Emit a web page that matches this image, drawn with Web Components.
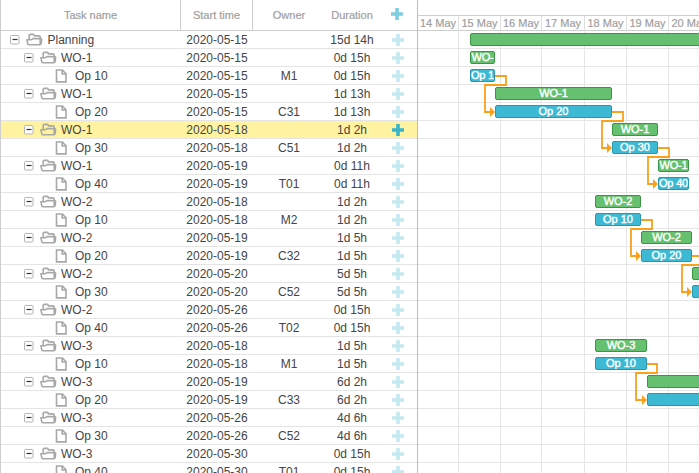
<!DOCTYPE html>
<html lang="en">
<head>
<meta charset="utf-8">
<title>Planning</title>
<style>
body{margin:0;width:699px;height:473px;overflow:hidden;background:#fff;font-family:"Liberation Sans",Arial,sans-serif;font-size:12px;color:#454545}
</style>
</head>
<body>
<gantt-app></gantt-app>
<script>
const shadow = (el, html) => { el.attachShadow({mode: "open"}).innerHTML = html; };

customElements.define("plus-icon", class extends HTMLElement {
  connectedCallback() {
    shadow(this, `<style>:host{display:block;width:12px;height:12px;opacity:.28}:host([strong]){opacity:.95}:host([head]){opacity:.62}svg{display:block}</style>
    <svg width="12" height="12"><path d="M4.2 0h3.6v4.2H12v3.6H7.8V12H4.2V7.8H0V4.2h4.2z" fill="#2fb2cc"/></svg>`);
  }
});

customElements.define("tree-icon", class extends HTMLElement {
  connectedCallback() {
    const shapes = {
      toggle: `<svg width="11" height="11"><rect x="1.5" y="1.5" width="8.5" height="8.5" rx="1" fill="#fff" stroke="#b4b4b4"/><path d="M3.5 5.5h5" stroke="#333" stroke-width="1.2"/></svg>`,
      folder: `<svg width="17" height="13"><path d="M3.2 6V2.6Q3.2 1.4 4.4 1.4H7.4L8.8 2.9H13Q14.2 2.9 14.2 4V11M3 11.8Q2 11.8 1.8 10.8L.9 6.7H5.4L7 5.6H14.6Q15.7 5.6 15.6 6.8L15.1 10.7Q15 11.8 13.8 11.8Z" fill="none" stroke="#a8a8a8" stroke-width="1.6" stroke-linejoin="round"/></svg>`,
      file: `<svg width="12" height="14"><path d="M1.5 1H7.4L11 4.7V12.9H1.5ZM7.2 1V5H11" fill="#fff" stroke="#a8a8a8" stroke-width="1.6"/></svg>`
    };
    shadow(this, `<style>:host{display:block;flex:none}svg{display:block}</style>${shapes[this.getAttribute("kind")]}`);
  }
});

customElements.define("grid-head", class extends HTMLElement {
  connectedCallback() {
    shadow(this, `<style>
      :host{display:grid;grid-template-columns:180px 72px 72px 54px 38px;height:30px;border-bottom:1px solid #cecece;font-size:11px;color:#a0a0a0;-webkit-text-stroke:.2px #a0a0a0}
      div{display:flex;align-items:center;justify-content:center;white-space:nowrap;box-sizing:border-box}
      .line{border-right:1px solid #cecece}
      .p{padding-bottom:2px;padding-right:2px}
    </style>
    <div class="line">Task name</div><div class="line">Start time</div><div>Owner</div><div>Duration</div><div class="p"><plus-icon head></plus-icon></div>`);
  }
});

customElements.define("grid-row", class extends HTMLElement {
  connectedCallback() {
    const a = k => this.getAttribute(k) || "";
    const kind = a("kind");
    const icons = kind === "op"
      ? `<tree-icon kind="file"></tree-icon>`
      : `<tree-icon kind="toggle"></tree-icon><tree-icon kind="folder"></tree-icon>`;
    shadow(this, `<style>
      :host{display:grid;grid-template-columns:180px 72px 72px 54px 38px;height:17px;border-bottom:1px solid #e4e4e4}
      :host([selected]){background:#fff3a1}
      div{display:flex;align-items:center;justify-content:center;white-space:nowrap;min-width:0;height:17px}
      .name{justify-content:flex-start;box-sizing:border-box}
      .root{padding-left:8px}.wo{padding-left:22px}.op{padding-left:54px}
      .root tree-icon+tree-icon,.wo tree-icon+tree-icon{margin-left:6px}
      span{margin-left:4.5px}
      .wo span{margin-left:4px}
      .op span{margin-left:8px}
    </style>
    <div class="name ${kind}">${icons}<span><slot></slot></span></div>
    <div>${a("start")}</div><div>${a("owner")}</div><div>${a("duration")}</div>
    <div><plus-icon ${this.hasAttribute("selected") ? "strong" : ""}></plus-icon></div>`);
  }
});

customElements.define("task-bar", class extends HTMLElement {
  connectedCallback() {
    shadow(this, `<style>
      :host{display:flex;flex:none;box-sizing:border-box;height:13px;margin-top:2px;border:1px solid #2898b0;border-radius:2px;background:#3db9d3;color:#fff;font-size:11px;-webkit-text-stroke:.4px #fff;overflow:hidden;align-items:center;justify-content:center;white-space:nowrap;line-height:13px}
      :host([group]){background:#65c16f;border-color:#3c9445}
      :host([clip]){letter-spacing:-.2px}
    </style><span><slot></slot></span>`);
    this.style.width = this.getAttribute("length") + "px";
    this.style.marginLeft = this.getAttribute("from") + "px";
  }
});

customElements.define("chart-row", class extends HTMLElement {
  connectedCallback() {
    shadow(this, `<style>:host{display:flex;align-items:flex-start;height:17px;border-bottom:1px solid #e6e6e6}</style><slot></slot>`);
  }
});

customElements.define("time-scale", class extends HTMLElement {
  connectedCallback() {
    shadow(this, `<style>
      :host{display:block;height:30px;border-bottom:1px solid #cecece;font-size:11px;color:#a0a0a0;-webkit-text-stroke:.2px #a0a0a0}
      .top{height:15px;border-bottom:1px solid #cecece}
      .days{display:grid;grid-template-columns:41px 42px 41px 43px 42px 42px 42px;height:14px}
      .days div{border-right:1px solid #dedede;text-align:center;line-height:15px;white-space:nowrap}
    </style><div class="top"></div><div class="days">${[14,15,16,17,18,19,20].map(d => `<div>${d} May</div>`).join("")}</div>`);
  }
});

customElements.define("link-layer", class extends HTMLElement {
  connectedCallback() {
    // exit x, exit y, right turn x, return x, arrow tip x
    const links = [[495,76,506,485,495],[612,112,623,602,612],[658,148,669,648,658],[641,220,652,631,641],[692,256,703,682,692],[647,364,657,636,647]];
    const paths = links.map(([x,y,r,l,t]) =>
      `<path d="M${x} ${y}H${r}V${y+9}H${l}V${y+36}H${t-4}" fill="none" stroke="#f9a11b" stroke-width="1.8"/><path d="M${t-5} ${y+31}L${t} ${y+36}L${t-5} ${y+41}Z" fill="#f9a11b"/>`).join("");
    shadow(this, `<style>:host{position:absolute;inset:0;pointer-events:none}svg{display:block}</style>
      <svg width="281" height="442" viewBox="418 31 281 442">${paths}</svg>`);
  }
});

customElements.define("gantt-app", class extends HTMLElement {
  connectedCallback() {
    // kind, name, start day, owner, duration, bar start, bar width
    const rows = [
      ["root","Planning","05-15","","15d 14h",470,300],
      ["wo","WO-1","05-15","","0d 15h",470,25],
      ["op","Op 10","05-15","M1","0d 15h",470,25],
      ["wo","WO-1","05-15","","1d 13h",495,117],
      ["op","Op 20","05-15","C31","1d 13h",495,117],
      ["wo","WO-1","05-18","","1d 2h",612,46],
      ["op","Op 30","05-18","C51","1d 2h",612,46],
      ["wo","WO-1","05-19","","0d 11h",658,31],
      ["op","Op 40","05-19","T01","0d 11h",658,31],
      ["wo","WO-2","05-18","","1d 2h",595,46],
      ["op","Op 10","05-18","M2","1d 2h",595,46],
      ["wo","WO-2","05-19","","1d 5h",641,51],
      ["op","Op 20","05-19","C32","1d 5h",641,51],
      ["wo","WO-2","05-20","","5d 5h",692,200],
      ["op","Op 30","05-20","C52","5d 5h",692,200],
      ["wo","WO-2","05-26","","0d 15h"],
      ["op","Op 40","05-26","T02","0d 15h"],
      ["wo","WO-3","05-18","","1d 5h",595,52],
      ["op","Op 10","05-18","M1","1d 5h",595,52],
      ["wo","WO-3","05-19","","6d 2h",647,260],
      ["op","Op 20","05-19","C33","6d 2h",647,260],
      ["wo","WO-3","05-26","","4d 6h"],
      ["op","Op 30","05-26","C52","4d 6h"],
      ["wo","WO-3","05-30","","0d 15h"],
      ["op","Op 40","05-30","T01","0d 15h"]
    ];
    const grid = rows.map(([k,n,s,o,d], i) => `<grid-row kind="${k}" start="2020-${s}" owner="${o}" duration="${d}" ${i === 5 ? "selected" : ""}>${n}</grid-row>`).join("");
    const chart = rows.map(([k,n,,,,x,w]) => `<chart-row>${x ? `<task-bar ${k === "op" ? "" : "group"} ${w < 32 ? "clip" : ""} from="${x-418}" length="${w}">${w > 199 ? "" : w < 30 ? n.slice(0, k === "op" ? 4 : 3) : n}</task-bar>` : ""}</chart-row>`).join("");
    shadow(this, `<style>
      :host{display:grid;grid-template-columns:417px 281px;width:699px;height:473px;overflow:hidden;box-sizing:border-box;border-left:1px solid #cecece}
      .left{box-sizing:border-box;border-right:1px solid #bdbdbd;height:473px;overflow:hidden}
      .right{overflow:hidden;height:473px}
      .plot{position:relative;height:442px;overflow:hidden;background:
        linear-gradient(#e6e6e6,#e6e6e6) 40px 0/1px 100% no-repeat,linear-gradient(#e6e6e6,#e6e6e6) 82px 0/1px 100% no-repeat,
        linear-gradient(#e6e6e6,#e6e6e6) 123px 0/1px 100% no-repeat,linear-gradient(#e6e6e6,#e6e6e6) 166px 0/1px 100% no-repeat,
        linear-gradient(#e6e6e6,#e6e6e6) 208px 0/1px 100% no-repeat,linear-gradient(#e6e6e6,#e6e6e6) 250px 0/1px 100% no-repeat}
    </style>
    <div class="left"><grid-head></grid-head>${grid}</div>
    <div class="right"><time-scale></time-scale><div class="plot">${chart}<link-layer></link-layer></div></div>`);
  }
});
</script>
</body>
</html>
